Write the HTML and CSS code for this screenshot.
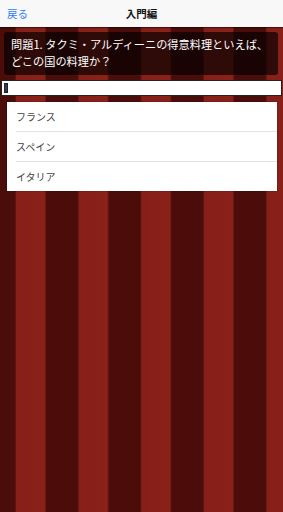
FILE: index.html
```html
<!DOCTYPE html>
<html lang="ja">
<head>
    <meta charset="UTF-8">
    <meta name="viewport" content="width=device-width, initial-scale=1.0">
    <title>入門編</title>
    <link rel="stylesheet" href="styles.css">
</head>
<body>
    <!-- Navigation bar -->
    <header class="navBar">
        <a class="backLink">戻る</a>
        <h1 class="navTitle">入門編</h1>
        <span></span>
    </header>

    <main class="quiz">
        <!-- Question -->
        <div class="question">問題1. タクミ・アルディーニの得意料理といえば、どこの国の料理か？</div>

        <!-- Progress bar -->
        <div class="progress">
            <span class="progressKnob"></span>
        </div>

        <!-- Answers -->
        <ul class="answers">
            <li>フランス</li>
            <li>スペイン</li>
            <li>イタリア</li>
        </ul>
    </main>
</body>
</html>
```

FILE: styles.css
```css
* {
    margin: 0;
    padding: 0;
    box-sizing: border-box;
    font-family: "Noto Sans CJK JP", "Noto Sans", sans-serif;
}

html, body {
    height: 100%;
}

body {
    background-color: #4c0d0a;
    background-image: linear-gradient(to right,
        #4c0d0a 0px, #861f18 1.5px, #8a2219 29.8px, #4c0d0a 31.3px,
        #4a0d0a 61.2px, #4c0d0a 62.67px);
    background-size: 62.67px 100%;
    background-position: 15px 0;
}

.navBar {
    display: grid;
    grid-template-columns: 1fr auto 1fr;
    align-items: center;
    height: 27px;
    padding: 0 7px;
    background-color: #f8f8f8;
    box-shadow: 0 1px 1px rgba(0, 0, 0, 0.45);
}

.backLink {
    font-size: 10.5px;
    color: #2f7ef3;
}

.navTitle {
    font-size: 10.5px;
    font-weight: 700;
    color: #111;
}

.quiz {
    padding: 5px 1px 0;
}

.question {
    margin: 0 4px 0 3px;
    padding: 4px 6px 5px 7px;
    min-height: 43px;
    border-radius: 3px;
    background-color: rgba(0, 0, 0, 0.66);
    color: #fff;
    font-size: 11.2px;
    line-height: 17px;
}

.progress {
    display: flex;
    align-items: center;
    height: 16px;
    margin-top: 5px;
    padding: 0 2px;
    background-color: #fff;
    border: 1px solid #222;
}

.progressKnob {
    width: 4px;
    height: 10px;
    background-color: #34414d;
    border: 1px solid #1c242c;
}

.answers {
    list-style: none;
    margin: 6px 5px 0 6px;
    background-color: #fff;
    box-shadow: 0 0 1px rgba(0, 0, 0, 0.6);
}

.answers li {
    height: 30px;
    line-height: 30px;
    margin-left: 9px;
    padding-left: 0;
    font-size: 10px;
    color: #444;
    border-bottom: 1px solid #e2e2e2;
}

.answers li:last-child {
    border-bottom: none;
    height: 29px;
}
```
